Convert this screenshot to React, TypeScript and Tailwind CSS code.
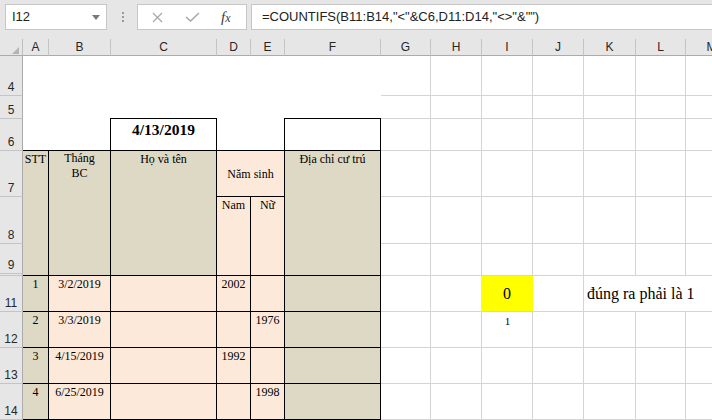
import React from "react";

const COLS = ["A", "B", "C", "D", "E", "F", "G", "H", "I", "J", "K", "L", "M"];
const ROWS = [4, 5, 6, 7, 8, 9, 10, 11, 12, 13, 14];

const GRID =
  "grid grid-cols-[23px_26px_62px_106px_34px_34px_96px_50px_51px_51px_51px_52px_50px_52px] grid-rows-[17px_40px_23px_32px_46px_47px_30px_2px_36px_36px_36px_36px]";

const SERIF = "font-['Liberation_Serif','Times_New_Roman',serif] text-black";
const KHAKI = "bg-[#ddd9c4]";
const PEACH = "bg-[#fde9d9]";
const CELL = "border-r border-b border-black flex justify-center text-[12px] leading-[14px]";
const TOP = "shadow-[0_-1px_0_#000]";
const BOX = "shadow-[0_-1px_0_#000,-1px_0_0_#000,-1px_-1px_0_#000]";

const DATA = [
  { row: "row-start-9", stt: "1", date: "3/2/2019", nam: "2002", nu: "" },
  { row: "row-start-10", stt: "2", date: "3/3/2019", nam: "", nu: "1976" },
  { row: "row-start-11", stt: "3", date: "4/15/2019", nam: "1992", nu: "" },
  { row: "row-start-12", stt: "4", date: "6/25/2019", nam: "", nu: "1998" },
];

function FormulaBar() {
  return (
    <div className="flex h-[39px] items-start bg-[#e6e6e6] pt-[4px] font-['Liberation_Sans',Arial,sans-serif] text-[13px] text-[#222]">
      <div className="ml-[5px] flex h-[26px] w-[102px] items-center justify-between border border-[#c6c6c6] bg-white pl-[6px] pr-[6px]">
        <span>I12</span>
        <svg width="8" height="5" viewBox="0 0 8 5">
          <polygon points="0,0 8,0 4,5" fill="#7a7a7a" />
        </svg>
      </div>
      <div className="flex h-[26px] w-[30px] flex-col items-center justify-center gap-[2px] pl-[1px]">
        <span className="h-[2px] w-[2px] bg-[#9a9a9a]" />
        <span className="h-[2px] w-[2px] bg-[#9a9a9a]" />
        <span className="h-[2px] w-[2px] bg-[#9a9a9a]" />
      </div>
      <div className="flex h-[26px] w-[110px] items-center border border-[#c6c6c6] bg-white">
        <svg className="ml-[14px]" width="11" height="11" viewBox="0 0 11 11">
          <path d="M1 1 L10 10 M10 1 L1 10" stroke="#a8a8a8" strokeWidth="1.3" fill="none" />
        </svg>
        <svg className="ml-[22px]" width="15" height="10" viewBox="0 0 15 10">
          <path d="M1 5 L5.5 9 L14 1" stroke="#a8a8a8" strokeWidth="1.5" fill="none" />
        </svg>
        <span className="ml-[21px] font-['Liberation_Serif',serif] text-[15px] italic leading-none text-[#404040]">
          f<span className="text-[12px]">x</span>
        </span>
      </div>
      <div className="ml-[4px] flex h-[26px] flex-1 items-center border border-r-0 border-[#c6c6c6] bg-white pl-[10px] whitespace-nowrap">
        =COUNTIFS(B11:B14,"&lt;"&amp;C6,D11:D14,"&lt;&gt;"&amp;"")
      </div>
    </div>
  );
}

function BaseGrid() {
  return (
    <div className={`${GRID} col-start-1 row-start-1 font-['Liberation_Sans',Arial,sans-serif] text-[12px] text-[#262626]`}>
      <div className="flex items-end justify-end border-r border-b border-r-[#bdbdbd] border-b-[#ababab] bg-[#e6e6e6] pr-[3px] pb-[1px]">
        <svg width="7" height="7" viewBox="0 0 7 7">
          <polygon points="0,7 7,0 7,7" fill="#b5b5b5" />
        </svg>
      </div>
      {COLS.map((c) => (
        <div
          key={c}
          className="flex items-center justify-center border-r border-b border-r-[#c4c4c4] border-b-[#ababab] bg-[#e6e6e6] leading-none"
        >
          {c}
        </div>
      ))}
      {ROWS.map((r) => (
        <React.Fragment key={r}>
          <div className="flex items-end justify-center overflow-hidden border-r border-b border-r-[#ababab] border-b-[#c4c4c4] bg-[#e6e6e6] leading-[15px]">
            {r === 10 ? "" : r}
          </div>
          {r !== 10 &&
            COLS.map((c) => (
              <div
                key={c}
                className={`border-r border-b border-[#d4d4d4] bg-white ${r === 9 ? "row-span-2" : ""}`}
              />
            ))}
        </React.Fragment>
      ))}
    </div>
  );
}

function Sheet() {
  return (
    <div className={`${GRID} col-start-1 row-start-1 ${SERIF}`}>
      {/* white-filled area above the table */}
      <div className="col-start-2 col-span-6 row-start-2 row-span-2 bg-white" />
      <div className="col-start-2 col-span-2 row-start-4 bg-white" />
      <div className="col-start-5 col-span-2 row-start-4 bg-white" />
      <div className={`col-start-4 row-start-4 bg-white ${BOX} border-r border-b border-black flex justify-center pt-[2px] text-[15.5px] leading-[18px] font-bold`}>
        4/13/2019
      </div>
      <div className={`col-start-7 row-start-4 bg-white ${BOX} border-r border-b border-black`} />

      {/* header */}
      <div className={`col-start-2 row-start-5 row-span-4 ${KHAKI} ${CELL} ${TOP} pt-[1px]`}>STT</div>
      <div className={`col-start-3 row-start-5 row-span-4 ${KHAKI} ${TOP} border-r border-b border-black flex flex-col items-center justify-start text-[12px] leading-[15px]`}>
        <span>Tháng</span>
        <span>BC</span>
      </div>
      <div className={`col-start-4 row-start-5 row-span-4 ${KHAKI} ${CELL} ${TOP} pt-[1px]`}>Họ và tên</div>
      <div className={`col-start-5 col-span-2 row-start-5 ${PEACH} ${CELL} ${TOP} items-center`}>Năm sinh</div>
      <div className={`col-start-5 row-start-6 row-span-3 ${PEACH} ${CELL} pt-[1px]`}>Nam</div>
      <div className={`col-start-6 row-start-6 row-span-3 ${PEACH} ${CELL} pt-[1px]`}>Nữ</div>
      <div className={`col-start-7 row-start-5 row-span-4 ${KHAKI} ${CELL} ${TOP} pt-[1px]`}>Địa chỉ cư trú</div>

      {/* data rows */}
      {DATA.map((d) => (
        <React.Fragment key={d.stt}>
          <div className={`${d.row} col-start-2 ${KHAKI} ${CELL} pt-[1px]`}>{d.stt}</div>
          <div className={`${d.row} col-start-3 ${PEACH} ${CELL} pt-[1px]`}>{d.date}</div>
          <div className={`${d.row} col-start-4 ${PEACH} ${CELL}`} />
          <div className={`${d.row} col-start-5 ${PEACH} ${CELL} pt-[1px]`}>{d.nam}</div>
          <div className={`${d.row} col-start-6 ${PEACH} ${CELL} pt-[1px]`}>{d.nu}</div>
          <div className={`${d.row} col-start-7 ${KHAKI} ${CELL}`} />
        </React.Fragment>
      ))}

      {/* right side */}
      <div className="col-start-10 row-start-9 flex items-center justify-center border-r border-b border-r-[#ffff00] border-b-[#d4d4d4] bg-[#ffff00] shadow-[-1px_0_0_#ffff00] text-[16px] leading-none">
        0
      </div>
      <div className="col-start-12 col-span-3 row-start-9 flex items-center whitespace-nowrap border-b border-[#d4d4d4] bg-white pl-[3px] text-[16px] leading-none">
        đúng ra phải là 1
      </div>
      <div className="col-start-10 row-start-10 flex justify-center pt-[3px] text-[11px] leading-[12px]">1</div>
    </div>
  );
}

export default function App() {
  return (
    <div className="h-[420px] w-[712px] overflow-hidden bg-white">
      <FormulaBar />
      <div className="grid">
        <BaseGrid />
        <Sheet />
      </div>
    </div>
  );
}
